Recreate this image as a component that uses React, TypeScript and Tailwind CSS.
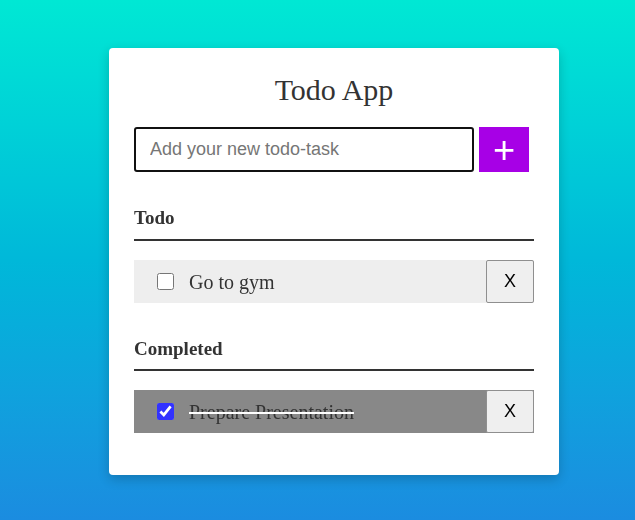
import React, { useState } from 'react';

type Task = { id: number; text: string; done: boolean };

const initial: Task[] = [
  { id: 1, text: 'Go to gym', done: false },
  { id: 2, text: 'Prepare Presentation', done: true }
];

const serif = { fontFamily: '"Liberation Serif", "Times New Roman", serif' };

const Row: React.FC<{ task: Task; onToggle: () => void; onRemove: () => void }> = ({ task, onToggle, onRemove }) => (
  <li className={`flex items-center h-[43px] ${task.done ? 'bg-[#888888]' : 'bg-[#eeeeee]'}`}>
    <input
      type="checkbox"
      checked={task.done}
      onChange={onToggle}
      className="ml-[23px] w-[17px] h-[17px] accent-[#3232ff]"
    />
    <span
      className={`ml-[15px] flex-1 text-[20px] text-[#333] ${task.done ? 'line-through decoration-white decoration-2' : ''}`}
    >
      {task.text}
    </span>
    <button
      onClick={onRemove}
      className="w-[48px] h-[43px] border border-[#8f8f8f] rounded-[2px] bg-[#efefef] text-[18px] text-black font-['Liberation_Sans',Arial,sans-serif]"
    >
      X
    </button>
  </li>
);

export default function App() {
  const [tasks, setTasks] = useState<Task[]>(initial);
  const [text, setText] = useState('');

  const add = () => {
    if (!text.trim()) return;
    setTasks([...tasks, { id: Date.now(), text: text.trim(), done: false }]);
    setText('');
  };
  const toggle = (id: number) => setTasks(tasks.map(t => (t.id === id ? { ...t, done: !t.done } : t)));
  const remove = (id: number) => setTasks(tasks.filter(t => t.id !== id));

  const todo = tasks.filter(t => !t.done);
  const completed = tasks.filter(t => t.done);

  return (
    <div className="min-h-[520px] w-full bg-gradient-to-b from-[#00e8d4] via-[#00b8d9] to-[#1b8ce0] pt-[48px]" style={serif}>
      <div className="ml-[109px] w-[450px] bg-white rounded-[4px] shadow-[0_4px_12px_rgba(0,0,0,0.2)] px-[25px] pt-[22px] pb-[42px]">
        <h1 className="text-center text-[30px] leading-[40px] text-[#333]">Todo App</h1>

        <div className="flex mt-[17px] gap-[5px]">
          <input
            autoFocus
            value={text}
            onChange={e => setText(e.target.value)}
            placeholder="Add your new todo-task"
            className="w-[340px] h-[45px] border-2 border-[#111] rounded-[3px] pl-[14px] text-[18px] text-[#333] placeholder:text-[#767676] outline-none font-['Liberation_Sans',Arial,sans-serif]"
          />
          <button
            onClick={add}
            className="w-[50px] h-[45px] bg-[#a700e6] text-white text-[38px] leading-none flex items-center justify-center font-['Liberation_Sans',Arial,sans-serif]"
          >
            +
          </button>
        </div>

        <h3 className="mt-[34px] text-[19px] font-bold text-[#333] leading-[24px]">Todo</h3>
        <div className="mt-[9px] h-[2px] bg-[#333]" />
        <ul className="mt-[19px]">
          {todo.map(t => (
            <Row key={t.id} task={t} onToggle={() => toggle(t.id)} onRemove={() => remove(t.id)} />
          ))}
        </ul>

        <h3 className="mt-[34px] text-[19px] font-bold text-[#333] leading-[24px]">Completed</h3>
        <div className="mt-[8px] h-[2px] bg-[#333]" />
        <ul className="mt-[19px]">
          {completed.map(t => (
            <Row key={t.id} task={t} onToggle={() => toggle(t.id)} onRemove={() => remove(t.id)} />
          ))}
        </ul>
      </div>
    </div>
  );
}
